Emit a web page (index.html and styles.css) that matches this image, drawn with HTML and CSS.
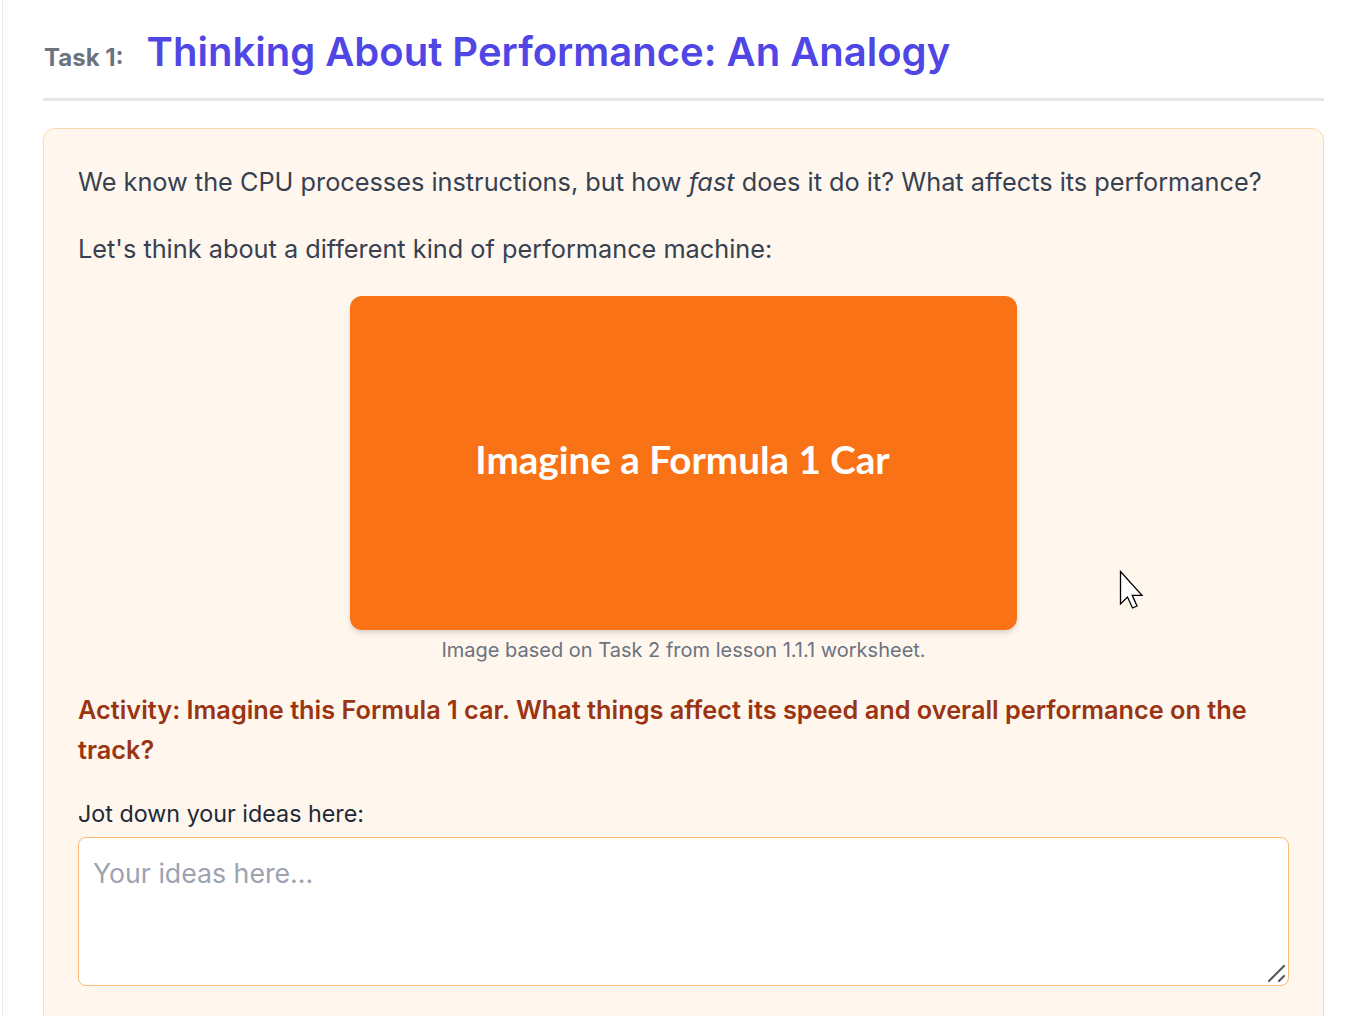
FILE: index.html
```html
<!DOCTYPE html>
<html lang="en">
<head>
<meta charset="utf-8">
<title>Task 1</title>
<link rel="stylesheet" href="styles.css">
</head>
<body>
<div class="frame">
  <main class="page">
    <header class="task-head">
      <span class="task-label">Task 1:</span>
      <h1 class="task-title">Thinking About Performance: An Analogy</h1>
    </header>
    <section class="card">
      <p class="lead">We know the CPU processes instructions, but how <em>fast</em> does it do it? What affects its performance?</p>
      <p class="lead second">Let's think about a different kind of performance machine:</p>
      <figure class="figure">
        <div class="image-box"><span>Imagine a Formula 1 Car</span></div>
        <figcaption class="caption">Image based on Task 2 from lesson 1.1.1 worksheet.</figcaption>
      </figure>
      <p class="activity">Activity: Imagine this Formula 1 car. What things affect its speed and overall performance on the track?</p>
      <label class="jot" for="ideas">Jot down your ideas here:</label>
      <div class="ideas-wrap">
        <textarea id="ideas" class="ideas" placeholder="Your ideas here..."></textarea>
        <svg class="grip" width="20" height="20" viewBox="0 0 20 20" xmlns="http://www.w3.org/2000/svg">
          <path d="M3 17 L18 2 M13 17 L18 12" stroke="#5a5a5a" stroke-width="2.2" stroke-linecap="round"/>
        </svg>
      </div>
    </section>
  </main>
</div>
<svg class="cursor" width="26" height="40" viewBox="0 0 26 40" xmlns="http://www.w3.org/2000/svg">
  <path d="M1.5 1.5 L1.5 34 L8.5 27 L13.5 38 L18 36 L13.2 25.3 L23 25.3 Z" fill="#ffffff" stroke="#000000" stroke-width="1.3" stroke-linejoin="miter"/>
</svg>
</body>
</html>
```

FILE: styles.css
```css
html, body {
  margin: 0;
  padding: 0;
  background: #ffffff;
}
body {
  font-family: Inter, "Noto Sans", sans-serif;
  color: #374151;
  position: relative;
  min-height: 1016px;
  overflow: hidden;
}
.frame {
  border-left: 1px solid #ececec;
  margin-left: 2px;
  min-height: 1016px;
}
.page {
  padding: 0 40px 0 40px;
}
.task-head {
  display: flex;
  align-items: baseline;
  gap: 23px;
  padding: 28px 0 22px 1px;
  border-bottom: 3px solid #e5e7eb;
}
.task-label {
  font-size: 24px;
  font-weight: 700;
  color: #6b7280;
}
.task-title {
  margin: 0;
  font-size: 40px;
  line-height: 48px;
  font-weight: 600;
  color: #4f46e5;
}
.card {
  margin-top: 27px;
  background: #fff7ed;
  border: 1px solid #fed7aa;
  border-radius: 12px;
  padding: 34px 34px 40px 34px;
  display: flex;
  flex-direction: column;
}
.lead {
  margin: 0;
  font-size: 25.3px;
  line-height: 38px;
  color: #374151;
}
.lead.second {
  margin-top: 29px;
}
.lead em {
  font-style: italic;
}
.figure {
  margin: 28px 0 0 0;
  display: flex;
  flex-direction: column;
  align-items: center;
}
.image-box {
  width: 667px;
  height: 334px;
  background: #f97316;
  border-radius: 12px;
  box-shadow: 0 4px 6px -1px rgba(0,0,0,0.12), 0 2px 4px -2px rgba(0,0,0,0.1);
  display: flex;
  align-items: center;
  justify-content: center;
}
.image-box span {
  font-family: Lato, "Noto Sans", sans-serif;
  font-weight: 700;
  font-size: 38.6px;
  color: #ffffff;
  margin-top: -8px;
  margin-right: 2px;
}
.caption {
  margin-top: 7px;
  font-size: 20px;
  line-height: 26px;
  color: #6b7280;
}
.activity {
  margin: 27px 0 0 0;
  font-size: 25.3px;
  line-height: 40px;
  font-weight: 600;
  color: #9a3412;
}
.jot {
  margin-top: 29px;
  font-size: 23.3px;
  line-height: 30px;
  color: #1f2937;
}
.ideas-wrap {
  position: relative;
  margin-top: 8px;
  display: flex;
}
.ideas {
  flex: 1;
  height: 149px;
  box-sizing: border-box;
  border: 1px solid #fdba74;
  border-radius: 8px;
  background: #ffffff;
  padding: 18px 14px;
  font-family: Inter, "Noto Sans", sans-serif;
  font-size: 26.7px;
  line-height: 34px;
  color: #374151;
  resize: none;
  outline: none;
}
.ideas::placeholder {
  color: #9ca3af;
}
.grip {
  position: absolute;
  right: 3px;
  bottom: 2px;
  pointer-events: none;
}
.cursor {
  position: absolute;
  left: 1119px;
  top: 570px;
  pointer-events: none;
}
```
